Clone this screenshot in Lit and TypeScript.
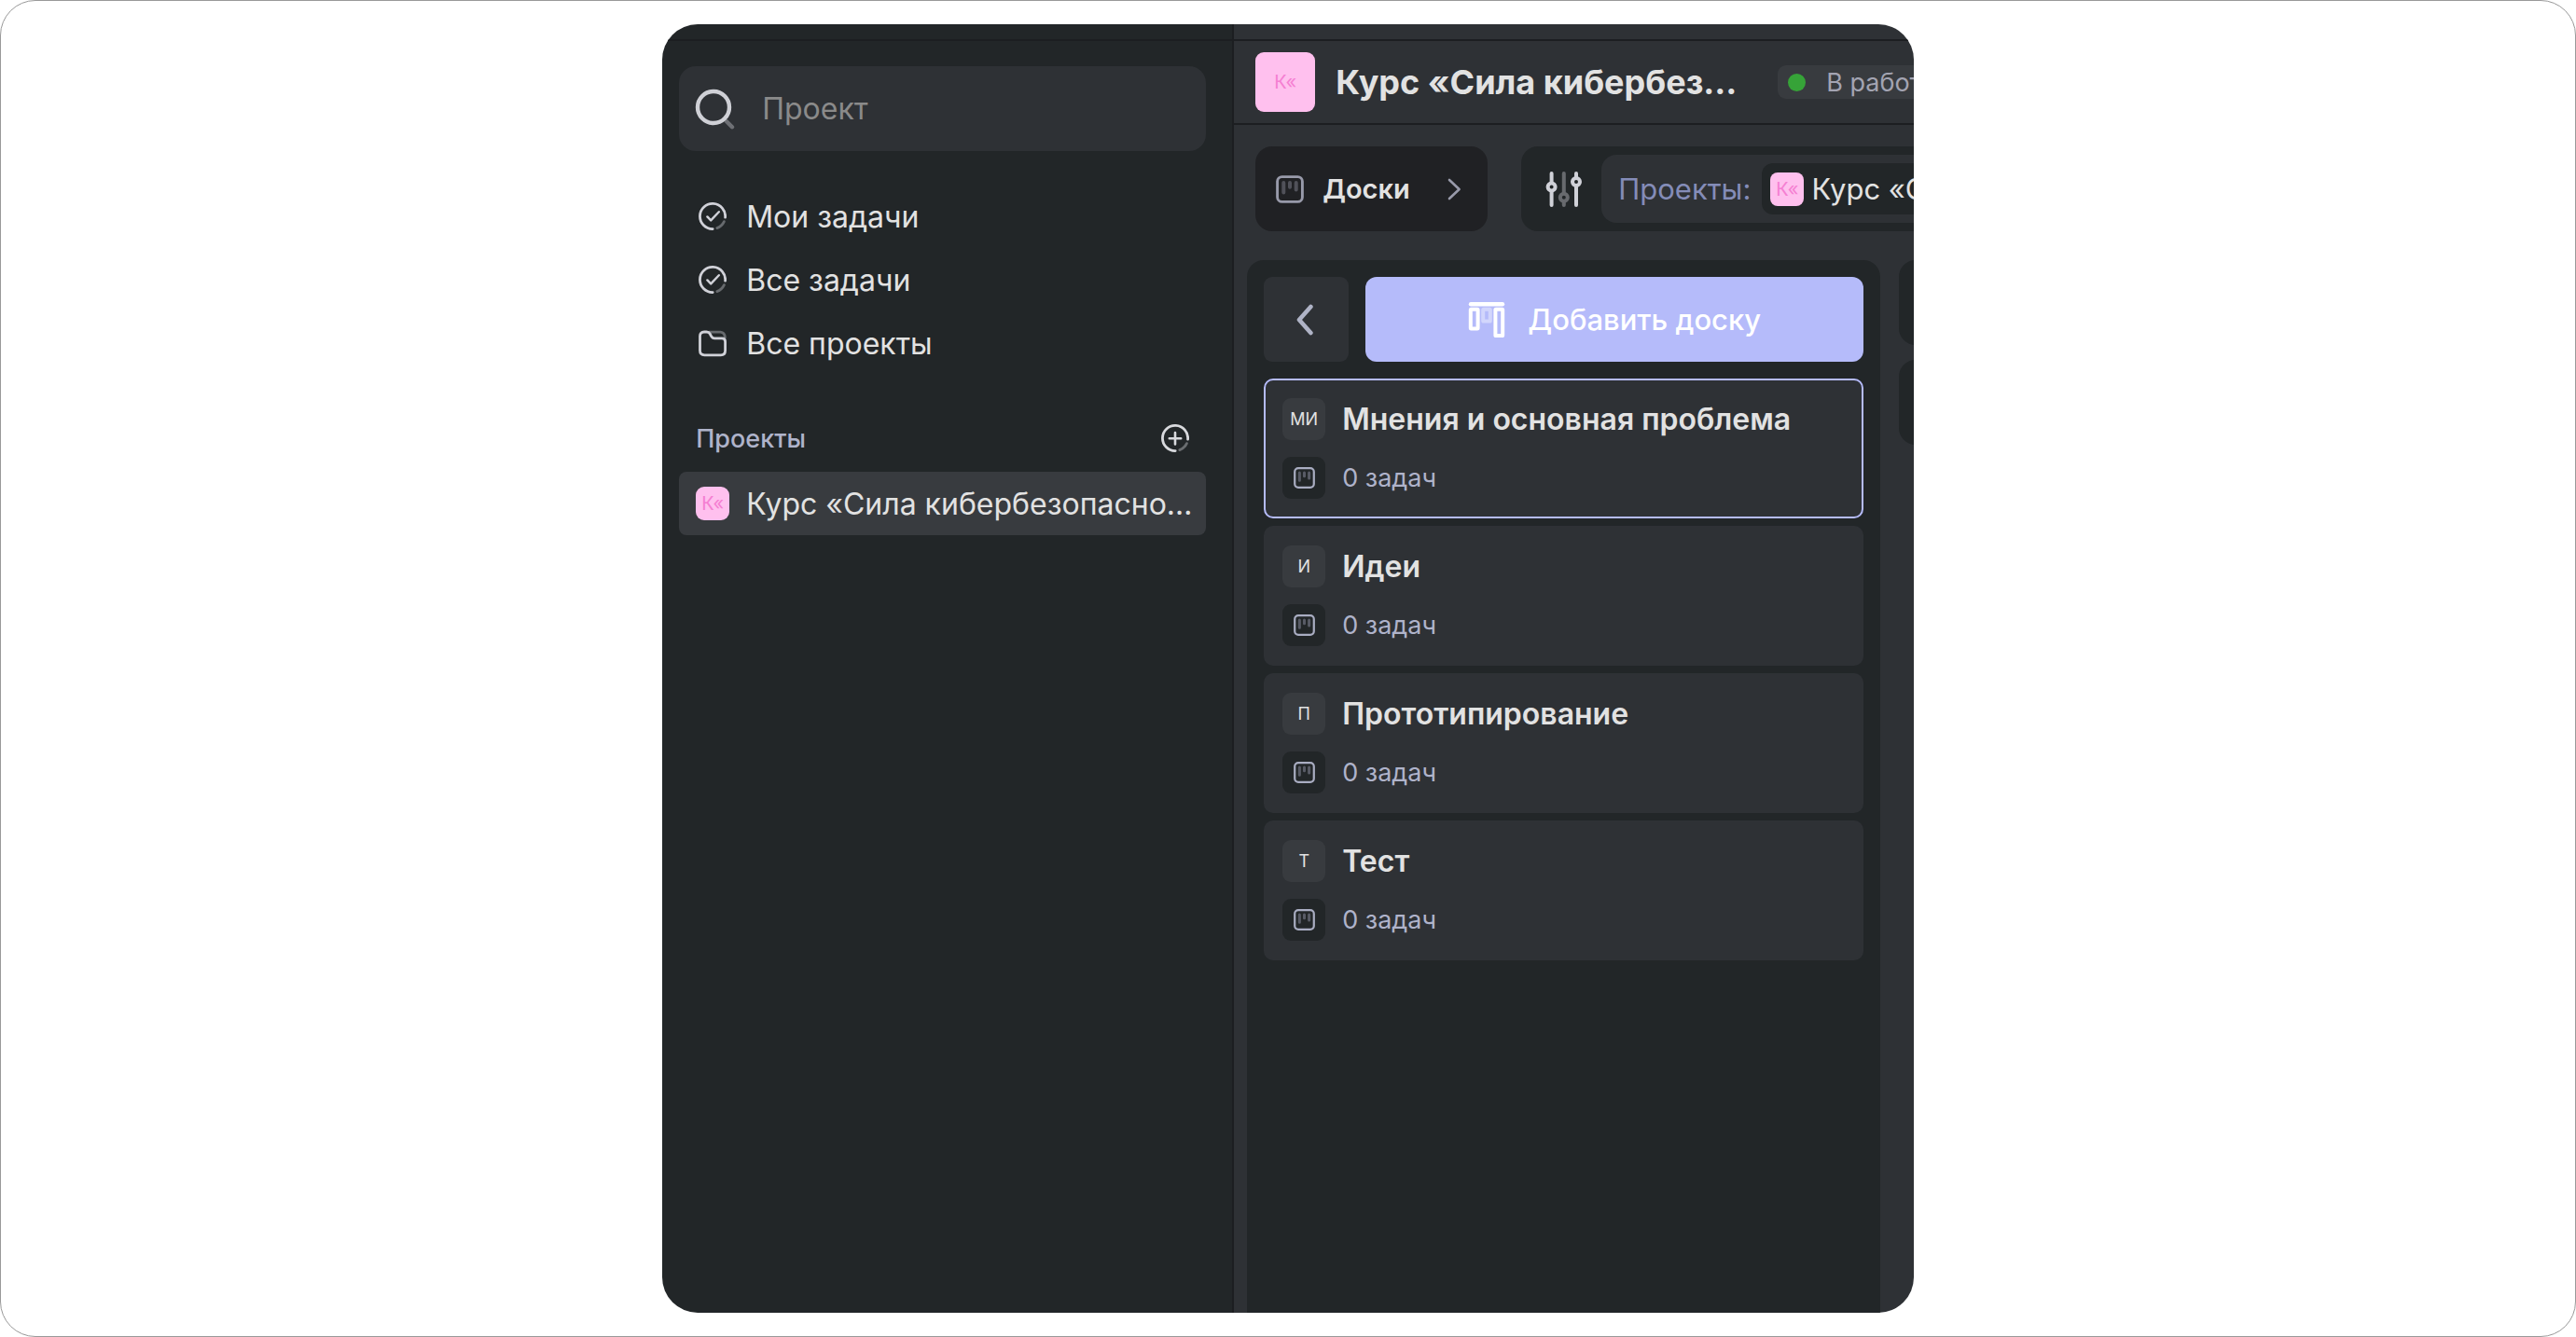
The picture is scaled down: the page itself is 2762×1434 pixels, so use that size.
import { LitElement, html, css, svg } from "lit";
import { customElement, property, state } from "lit/decorators.js";
import { classMap } from "lit/directives/class-map.js";

interface Board {
  initials: string;
  name: string;
  tasks: number;
}

const PROJECT = "Курс «Сила кибербезопасности»";

const BOARDS: Board[] = [
  { initials: "МИ", name: "Мнения и основная проблема", tasks: 0 },
  { initials: "И", name: "Идеи", tasks: 0 },
  { initials: "П", name: "Прототипирование", tasks: 0 },
  { initials: "Т", name: "Тест", tasks: 0 },
];

const ring = svg`
  <path d="M28.6 16.2A13.6 13.6 0 1 0 15.2 28.6" stroke-width="2.8"/>
  <path class="faint" d="M27.4 20.6A13.6 13.6 0 0 1 19.8 27.6" stroke-width="2.8"/>`;

const ICONS = {
  search: {
    box: "0 0 44 44",
    art: svg`
      <path class="faint" d="M33.8 35L40 41.2" stroke-width="4.4"/>
      <circle cx="20" cy="20" r="17" stroke-width="4.4"/>`,
  },
  check: {
    box: "0 0 30 30",
    art: svg`${ring}<path d="M9.4 15.4L13.2 19.4L21.8 10.2" stroke-width="2.4"/>`,
  },
  plus: {
    box: "0 0 30 30",
    art: svg`${ring}<path d="M15 9V21.4M8.8 15.2H21.2" stroke-width="2.6"/>`,
  },
  folder: {
    box: "0 0 30 30",
    art: svg`
      <path class="faint" d="M11.5 3.2H23.5Q28 3.6 28.4 9" stroke-width="2.8"/>
      <path d="M1.5 7.5Q1.5 3 6 3H8.6Q11 3 12.2 5L13.6 7.6Q14.8 9.8 17 9.8H25Q28.6 9.8 28.6 13.4V23Q28.6 27.8 23.8 27.8H6.3Q1.5 27.8 1.5 23Z" stroke-width="2.8"/>`,
  },
  board: {
    box: "0 0 30 30",
    art: svg`
      <g class="faint" stroke-width="4">
        <path d="M8.3 8V18.6M15 8V12.8M21.7 8V15.6"/>
      </g>
      <rect x="1.6" y="1.6" width="26.8" height="26.8" rx="5" stroke-width="2.9"/>`,
  },
  sliders: {
    box: "0 0 40 40",
    art: svg`
      <g stroke-width="4">
        <path d="M6.6 3V12.6M6.6 22.8V37M33 3V6.8M33 17V37"/>
        <circle cx="6.6" cy="17.6" r="4"/>
        <circle cx="33" cy="12" r="4"/>
        <g class="faint"><path d="M19.8 3V23M19.8 34V37"/><circle cx="19.8" cy="28.8" r="4"/></g>
      </g>`,
  },
  addBoard: {
    box: "0 0 40 40",
    art: svg`
      <g stroke-width="4">
        <path d="M3 3.2H37" stroke-width="4.4"/>
        <rect x="2.8" y="8.8" width="7.8" height="20.6" rx="0.6"/>
        <rect class="faint" x="16.2" y="8.8" width="7.6" height="12.8" rx="0.6"/>
        <rect x="29.4" y="8.8" width="7.8" height="28.2" rx="0.6"/>
      </g>`,
  },
  next: {
    box: "0 0 24 24",
    art: svg`<path d="M7 2L17.6 12L7 22" stroke-width="2.6"/>`,
  },
  back: {
    box: "0 0 34 34",
    art: svg`<path d="M21.4 3L9 17L21.4 31" stroke-width="4.6"/>`,
  },
};

type IconName = keyof typeof ICONS;

@customElement("ui-icon")
export class UiIcon extends LitElement {
  @property() name: IconName = "board";

  static styles = css`
    :host {
      display: block;
      flex: none;
      width: 30px;
      height: 30px;
    }
    svg {
      display: block;
      width: 100%;
      height: 100%;
      fill: none;
      stroke: currentColor;
      stroke-linecap: round;
      stroke-linejoin: round;
    }
    .faint {
      opacity: 0.4;
    }
  `;

  render() {
    const icon = ICONS[this.name];
    return html`<svg viewBox=${icon.box} aria-hidden="true">${icon.art}</svg>`;
  }
}

@customElement("project-sidebar")
export class ProjectSidebar extends LitElement {
  static styles = css`
    :host {
      display: block;
      background: #222628;
      border-right: 2px solid #1c1e21;
    }
    .cap {
      height: 16px;
      border-bottom: 2px solid #1c1e21;
    }
    .content {
      padding: 27px 28px 0 18px;
    }
    .search {
      display: flex;
      align-items: center;
      gap: 28px;
      height: 91px;
      padding: 0 17px;
      border-radius: 18px;
      background: #2e3135;
      color: #cfd0d6;
    }
    .search ui-icon {
      width: 44px;
      height: 44px;
    }
    input {
      flex: 1;
      min-width: 0;
      padding: 0;
      border: 0;
      outline: 0;
      background: none;
      color: #e2e2e2;
      font: 400 32px/40px Inter, sans-serif;
    }
    input::placeholder {
      color: #8a8a8a;
      opacity: 1;
    }
    nav {
      margin-top: 36px;
    }
    a {
      display: flex;
      align-items: center;
      gap: 18px;
      height: 68px;
      padding: 0 10px 0 18px;
      border-radius: 8px;
      color: #e2e2e2;
      font-size: 32px;
      text-decoration: none;
    }
    a.active {
      background: #383b3f;
    }
    .mark {
      flex: none;
      display: grid;
      place-items: center;
      width: 36px;
      color: #d0d1d8;
    }
    .avatar {
      height: 36px;
      border-radius: 9px;
      background: #ffc0ee;
      color: #f57fd2;
      font-size: 20px;
    }
    .name {
      overflow: hidden;
      white-space: nowrap;
      text-overflow: ellipsis;
    }
    .heading {
      display: flex;
      align-items: center;
      justify-content: space-between;
      height: 72px;
      margin-top: 32px;
      padding: 0 18px;
    }
    h2 {
      margin: 0;
      color: #afb3ca;
      font-size: 27px;
      font-weight: 500;
    }
    button {
      padding: 0;
      border: 0;
      background: none;
      color: #d8d9dd;
    }
  `;

  render() {
    return html`
      <div class="cap"></div>
      <div class="content">
        <label class="search">
          <ui-icon name="search"></ui-icon>
          <input type="text" placeholder="Проект" aria-label="Проект" />
        </label>
        <nav>
          <a href="#my"><span class="mark"><ui-icon name="check"></ui-icon></span><span class="name">Мои задачи</span></a>
          <a href="#all"><span class="mark"><ui-icon name="check"></ui-icon></span><span class="name">Все задачи</span></a>
          <a href="#projects"><span class="mark"><ui-icon name="folder"></ui-icon></span><span class="name">Все проекты</span></a>
        </nav>
        <div class="heading">
          <h2>Проекты</h2>
          <button type="button" aria-label="Добавить проект"><ui-icon name="plus"></ui-icon></button>
        </div>
        <a class="active" href="#course">
          <span class="mark avatar">К«</span><span class="name">${PROJECT}</span>
        </a>
      </div>
    `;
  }
}

@customElement("board-panel")
export class BoardPanel extends LitElement {
  @state() private selected = 0;

  static styles = css`
    :host {
      display: flex;
      flex-direction: column;
      gap: 18px;
      padding: 18px;
      border-radius: 18px 18px 0 0;
      background: #222628;
    }
    button {
      border: 0;
      font-family: inherit;
      text-align: left;
    }
    .actions {
      display: flex;
      gap: 18px;
      height: 91px;
    }
    .back {
      display: grid;
      place-items: center;
      width: 91px;
      padding: 0;
      border-radius: 9px;
      background: #2e3135;
      color: #afb3c6;
    }
    .back ui-icon {
      width: 34px;
      height: 34px;
    }
    .add {
      flex: 1;
      display: flex;
      align-items: center;
      justify-content: center;
      gap: 24px;
      border-radius: 12px;
      background: #b5bbfa;
      color: #fff;
      font-size: 31px;
      font-weight: 500;
    }
    .add ui-icon {
      width: 40px;
      height: 40px;
    }
    .list {
      display: flex;
      flex-direction: column;
      gap: 8px;
      margin: 0;
      padding: 0;
      list-style: none;
    }
    .card {
      display: grid;
      grid-template-columns: 46px 1fr;
      grid-auto-rows: 45px;
      align-items: center;
      gap: 18px;
      width: 100%;
      padding: 19px 18px;
      border: 2px solid transparent;
      border-radius: 10px;
      background: #2e3135 border-box;
    }
    .card.selected {
      border-color: #b5bbfa;
    }
    .tile {
      display: grid;
      place-items: center;
      height: 45px;
      border-radius: 9px;
      background: #222628;
      color: #a9adc2;
    }
    .tile ui-icon {
      width: 23px;
      height: 23px;
    }
    .initials {
      background: #383b3f;
      color: #e2e2e2;
      font-size: 18px;
    }
    .title {
      color: #e2e2e2;
      font-size: 32px;
      font-weight: 600;
    }
    .count {
      color: #afb3ca;
      font-size: 27px;
    }
  `;

  render() {
    return html`
      <div class="actions">
        <button class="back" type="button" aria-label="Назад"><ui-icon name="back"></ui-icon></button>
        <button class="add" type="button"><ui-icon name="addBoard"></ui-icon>Добавить доску</button>
      </div>
      <ul class="list">
        ${BOARDS.map(
          (board, i) => html`<li>
            <button
              type="button"
              class=${classMap({ card: true, selected: i === this.selected })}
              @click=${() => (this.selected = i)}
            >
              <span class="tile initials">${board.initials}</span>
              <span class="title">${board.name}</span>
              <span class="tile"><ui-icon name="board"></ui-icon></span>
              <span class="count">${board.tasks} задач</span>
            </button>
          </li>`,
        )}
      </ul>
    `;
  }
}

@customElement("project-main")
export class ProjectMain extends LitElement {
  static styles = css`
    :host {
      display: flex;
      flex-direction: column;
      min-width: 0;
      overflow: hidden;
      background: #2e3135;
      white-space: nowrap;
    }
    .cap {
      height: 16px;
      border-bottom: 2px solid #1c1e21;
    }
    header {
      display: flex;
      align-items: center;
      height: 88px;
      padding-left: 23px;
      border-bottom: 2px solid #1c1e21;
    }
    .avatar {
      flex: none;
      display: grid;
      place-items: center;
      width: 36px;
      height: 36px;
      border-radius: 8px;
      background: #ffc0ee;
      color: #f57fd2;
      font-size: 20px;
    }
    .avatar.large {
      width: 64px;
      height: 64px;
      border-radius: 9px;
    }
    h1 {
      flex: none;
      width: 440px;
      margin: 0 0 0 22px;
      overflow: hidden;
      text-overflow: ellipsis;
      color: #e2e2e2;
      font-size: 36px;
      font-weight: 700;
    }
    .status {
      flex: none;
      display: flex;
      align-items: center;
      gap: 22px;
      height: 36px;
      margin-left: 34px;
      padding: 0 18px 0 11px;
      border-radius: 9px;
      background: #383b3f;
      color: #a3a4b2;
      font-size: 27px;
    }
    .dot {
      width: 19px;
      height: 19px;
      border-radius: 50%;
      background: #36a338;
    }
    .toolbar {
      display: flex;
      gap: 36px;
      height: 91px;
      padding: 23px 0 31px 23px;
    }
    .boards {
      flex: none;
      display: flex;
      align-items: center;
      gap: 20px;
      width: 249px;
      padding: 0 24px 0 22px;
      border: 0;
      border-radius: 18px;
      background: #202124;
      color: #e2e2e2;
      font-family: inherit;
      font-size: 29px;
      font-weight: 600;
    }
    .boards ui-icon {
      color: #989aaa;
    }
    .boards ui-icon:last-child {
      width: 24px;
      height: 24px;
      margin-left: auto;
    }
    .filters {
      flex: none;
      display: flex;
      align-items: center;
      gap: 20px;
      padding: 0 9px 0 26px;
      border-radius: 18px;
      background: #222628;
      color: #d0d1d8;
    }
    .filters > ui-icon {
      width: 40px;
      height: 40px;
    }
    .filter {
      display: flex;
      align-items: center;
      gap: 12px;
      height: 73px;
      padding: 0 9px 0 18px;
      border-radius: 16px;
      background: #2e3135;
      color: #848cb8;
      font-size: 31px;
    }
    .value {
      display: flex;
      align-items: center;
      gap: 8px;
      height: 55px;
      padding: 0 12px 0 9px;
      border-radius: 12px;
      background: #222628;
      color: #e2e2e2;
    }
    .workspace {
      flex: 1;
      display: flex;
      gap: 20px;
      padding-left: 14px;
    }
    board-panel {
      flex: none;
      box-sizing: border-box;
      width: 679px;
    }
    .columns {
      flex: none;
      display: flex;
      flex-direction: column;
      gap: 16px;
      width: 400px;
    }
    .column {
      height: 91px;
      border-radius: 18px;
      background: #222628;
    }
  `;

  render() {
    return html`
      <div class="cap"></div>
      <header>
        <span class="avatar large">К«</span>
        <h1>${PROJECT}</h1>
        <span class="status"><span class="dot"></span>В работе</span>
      </header>
      <div class="toolbar">
        <button class="boards" type="button">
          <ui-icon name="board"></ui-icon>Доски<ui-icon name="next"></ui-icon>
        </button>
        <div class="filters">
          <ui-icon name="sliders"></ui-icon>
          <div class="filter">
            Проекты:
            <span class="value"><span class="avatar">К«</span>${PROJECT}</span>
          </div>
        </div>
      </div>
      <div class="workspace">
        <board-panel></board-panel>
        <div class="columns">
          <div class="column"></div>
          <div class="column"></div>
        </div>
      </div>
    `;
  }
}

@customElement("app-root")
export class AppRoot extends LitElement {
  static styles = css`
    :host {
      display: grid;
      grid-template-columns: 1fr 2fr 1fr;
      grid-template-columns: minmax(0, 51fr) minmax(0, 100fr) minmax(0, 51fr);
      box-sizing: border-box;
      min-height: 100vh;
      padding: 25px;
      border: 1px solid #999;
      border-radius: 38px;
      background: #fff;
      font-family: Inter, sans-serif;
    }
    .window {
      grid-column: 2;
      display: grid;
      grid-template-columns: 613px 1fr;
      overflow: hidden;
      border-radius: 38px;
    }
  `;

  render() {
    return html`
      <div class="window">
        <project-sidebar></project-sidebar>
        <project-main></project-main>
      </div>
    `;
  }
}
